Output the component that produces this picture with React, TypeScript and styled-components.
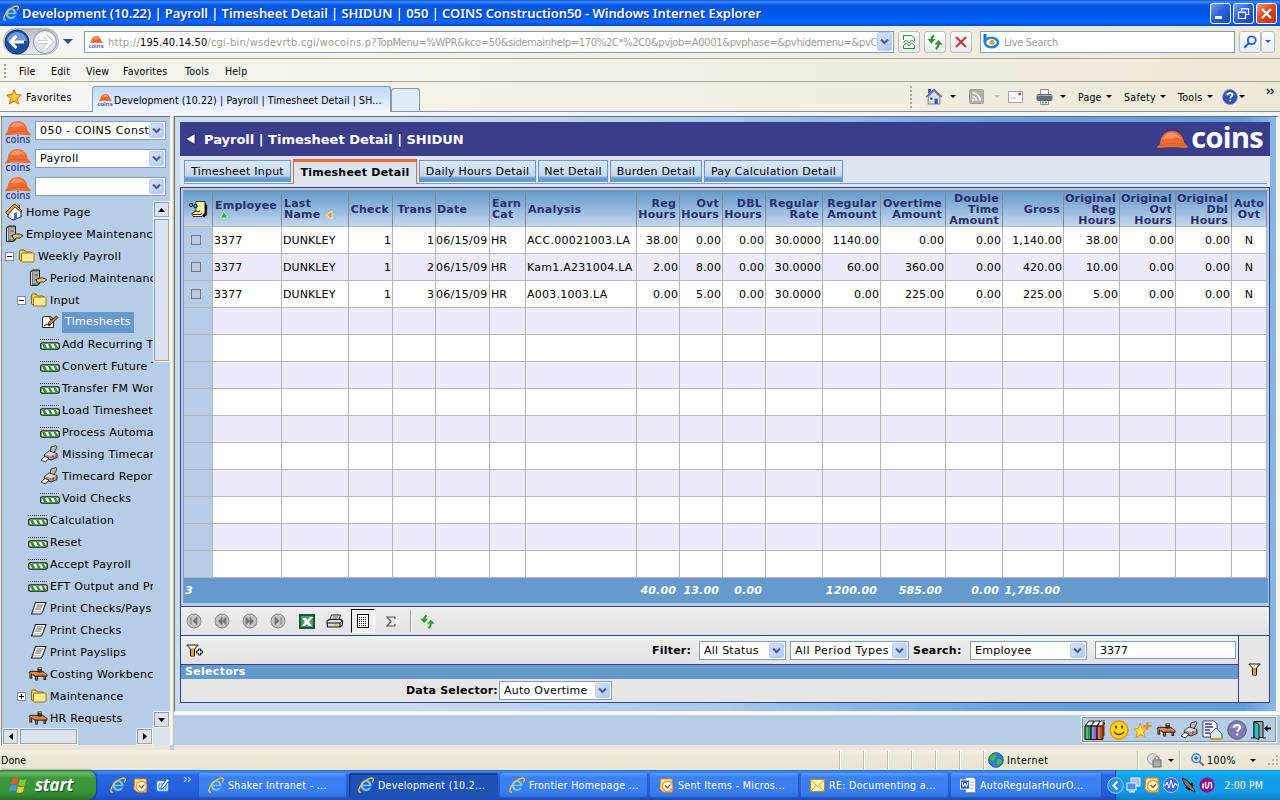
import React from "react";
import styled, { createGlobalStyle, css } from "styled-components";

const tahoma = `"DejaVu Sans Condensed", "DejaVu Sans", sans-serif`;
const verdana = `"DejaVu Sans", sans-serif`;

const Global = createGlobalStyle`
  * { box-sizing: border-box; }
  body { margin: 0; overflow: hidden; }
  svg { display: block; flex: none; }
`;

const Screen = styled.div`
  width: 1280px; height: 800px; display: flex; flex-direction: column; overflow: hidden;
  background: #ece9d8; font: 10.5px ${tahoma}; letter-spacing: .1px; color: #000; white-space: nowrap;
`;

/* ---------- generic pieces ---------- */
const Gap = styled.div<{ $w: number }>`width: ${p => p.$w}px; flex: none;`;
const Slot = styled.div<{ $w: number; $center?: boolean; $ls?: number }>`
  width: ${p => p.$w}px; flex: none; display: flex; align-items: center;
  justify-content: ${p => (p.$center ? "center" : "flex-start")};
  ${p => p.$ls !== undefined && css`letter-spacing: ${p.$ls}px;`}
`;
const Caret = styled.i<{ $c?: string; $s?: number }>`
  width: 0; height: 0; flex: none;
  border: ${p => p.$s || 3}px solid transparent; border-bottom: 0;
  border-top-color: ${p => p.$c || "#000"};
`;

const Svg = ({ w = 16, h = 16, vb, children }: { w?: number; h?: number; vb?: string; children: React.ReactNode }) => (
  <svg width={w} height={h} viewBox={vb || "0 0 16 16"}>{children}</svg>
);

/* ---------- icons ---------- */
const IE = ({ s = 16 }: { s?: number }) => (
  <Svg w={s} h={s}>
    <path d="M13.2 9.2H5.4c.1 1.700 1.200 2.700 2.800 2.700 1.100 0 1.900-.4 2.400-1.200h2.400c-.8 2.200-2.500 3.400-4.900 3.400-3.200 0-5.400-2.200-5.400-5.500s2.200-5.600 5.400-5.600c3.400 0 5.500 2.400 5.500 6.200zM5.500 7.400h5.100C10.400 6 9.500 5.100 8.100 5.100S5.700 6 5.500 7.400z" fill="#7cc8fa" stroke="#3f93e0" strokeWidth=".6" />
    <path d="M2.800 14.800C-.4 15.800.6 10.800 4.200 6.800 8 2.500 13.600-.2 15 1.500c.8 1 0 2.700-.8 4" fill="none" stroke="#f3c23a" strokeWidth="1.400" />
  </Svg>
);
const Helmet = ({ w, h }: { w: number; h: number }) => (
  <Svg w={w} h={h} vb="0 0 32 19">
    <path d="M0 18.500C.5 16.500 1.500 15.500 3 14.500 3.500 6 8.500 .8 15.500.8 22 .8 27 5.500 28 13l3.500 3.500c1 1-.5 1.800-3 1.800C20 17 9 17.500 0 18.500z" fill="#f26a32" />
    <path d="M6.500 9c1-4 4.500-6.500 8.500-6.500 4.500 0 7.500 2.500 9.500 6-4-2-7-.5-9 0-3 .7-6-1-9 .5z" fill="#fb9468" />
    <path d="M3 15c8-1.700 17-1.700 25-.5" fill="none" stroke="#d9531f" strokeWidth=".7" />
  </Svg>
);
const CoinsMini = styled.div<{ $s: number }>`
  width: ${p => p.$s}px; flex: none; display: flex; flex-direction: column; align-items: center;
  font: 600 ${p => p.$s * 0.38}px/${p => p.$s * 0.26}px "Open Sans", sans-serif; letter-spacing: 0; color: #3b3d91;
`;
const Favicon = () => (
  <CoinsMini $s={16}><Helmet w={13} h={9} />coins</CoinsMini>
);
const Folder = () => (
  <Svg w={17} h={14} vb="0 0 17 14">
    <path d="M1.500 11V2.500c0-1 .5-1.500 1.500-1.500h3l1.500 2H13l1 1v7.500H3z" fill="#f3cf58" stroke="#8a6410" />
    <path d="M3.500 12.500V5c0-.6.300-1 1-1H15c.8 0 1 .3 1 1v7c0 .7-.3 1-1 1H4.500c-.6 0-1 0-1-.5z" fill="#ffe894" stroke="#9c7418" />
  </Svg>
);
const House = () => (
  <Svg w={18} h={18} vb="0 0 18 18">
    <path d="M3 9l7-7 6 6v6l-8 3-5-3z" fill="#fff" stroke="#222" />
    <path d="M.7 9.500L8 2l2-1 7 7-1 1-6-5-5.500 6-1.500 2z" fill="#ff9c20" stroke="#333" strokeWidth=".9" />
    <path d="M9 16.500V10l3-1v6.500z" fill="#3f74c8" /><path d="M13 1.500v3M14.500 2v3" stroke="#b33" />
    <path d="M4 11l3 2v3l-3-2z" fill="#c9d9ef" />
  </Svg>
);
const Cabinet = () => (
  <Svg w={19} h={18} vb="0 0 19 18">
    <path d="M1.500 2.500L4 1h6.500v14L8 16.500H1.500z" fill="#777" stroke="#222" />
    <path d="M4 2.500h6v12H4z" fill="#ababab" /><path d="M2.500 3v13" stroke="#ddd" /><path d="M5.500 6h3M5.500 11h3" stroke="#444" />
    <path d="M7 10.500l4-1.500h3l4 1.500-3 2.500H11l-1 2-1.500-1.500z" fill="#f0bd66" stroke="#222" strokeWidth=".9" />
  </Svg>
);
const Sheet = () => (
  <Svg w={17} h={14} vb="0 0 17 14">
    <path d="M5.500 1.500H16l-3.500 9.500-1.500 2H1.500l1-2.500z" fill="#fff" stroke="#222" strokeWidth="1.100" />
    <path d="M7 4h6M6 6h6M5 8h6" stroke="#555" strokeWidth=".9" /><path d="M2.500 10.800h9" stroke="#999" strokeWidth=".8" />
  </Svg>
);
const Process = () => (
  <Svg w={20} h={12} vb="0 0 20 12">
    <path d="M0 1.500h20" stroke="#222" strokeDasharray="1 1" />
    <rect x=".8" y="4.800" width="18.400" height="6.400" rx="1.500" fill="#fff" stroke="#111" strokeWidth="1.300" />
    <path d="M2 6h3l2.500 4.500H4zM8 6h2.500l2.500 4.500h-3zM13.500 6h2.500l2 3.500v1h-2.500z" fill="#17a01b" />
  </Svg>
);
const EditIcon = () => (
  <Svg w={18} h={14} vb="0 0 18 14">
    <path d="M1.500 2.500l2-1h6l3 2.500v8.500h-11z" fill="#fff" stroke="#222" /><path d="M9 1.500v3h3" stroke="#222" fill="none" />
    <path d="M7 10l1-3 7.500-6 1.500 1.500-7.500 7z" fill="#c88140" stroke="#222" strokeWidth=".9" /><path d="M3 11l3-2 2 1.500 2-1" stroke="#111" fill="none" />
  </Svg>
);
const PrinterRed = () => (
  <Svg w={19} h={18} vb="0 0 19 18">
    <path d="M10 7l1-5 5-1.500 1 1.500-3 6z" fill="#b9b9b9" stroke="#333" strokeWidth=".9" />
    <path d="M4 10l5-4 8 2.500v4L11 15l-6-2z" fill="#9a9a9a" stroke="#222" strokeWidth=".9" />
    <path d="M5 9.500l4-3 7.500 2.200-5 2.300z" fill="#d8d8d8" />
    <path d="M1 15l4-3.500 4 1.500-3.500 4z" fill="#fff" stroke="#222" strokeWidth=".9" /><path d="M12 11.500h2" stroke="#f22" strokeWidth="2" />
  </Svg>
);
const Desk = ({ w = 20 }: { w?: number }) => (
  <Svg w={w} h={14} vb="0 0 20 14">
    <path d="M2.800 7v4.500M8.500 9v4.500M16.800 9v4" stroke="#1c0f05" strokeWidth="2.600" />
    <path d="M2.800 7v3.800M8.500 9v3.800M16.800 9v3.300" stroke="#c9743a" />
    <path d="M1 5.500l1-1.200h12.500L19 7.500v1.700H7z" fill="#d98a50" stroke="#1c0f05" strokeWidth=".9" />
    <path d="M1.500 6l5.700 2.600H18.500" stroke="#9a4f1c" fill="none" />
    <rect x="10" y="1" width="3.500" height="4" fill="#444" stroke="#111" strokeWidth=".9" /><path d="M10.500 1.500h3" stroke="#f90" />
  </Svg>
);
const NoteIcon = () => (
  <Svg w={20} h={18} vb="0 0 20 18">
    <path d="M8 1.500h9v11l-3 4H5l-1-3 4-3z" fill="#fff3a6" stroke="#111" strokeWidth=".8" />
    <path d="M18.500 5v9.500l-3 2.500M15 16.500l2.500-3.500V3" stroke="#111" fill="none" strokeWidth="1.300" /><path d="M6 12l3-1 2 1 1-2M5 14.500h8l1-2" stroke="#333" fill="none" />
    <circle cx="3" cy="5" r="1.700" fill="#29b6c6" stroke="#111" /><circle cx="7.500" cy="6" r="1.700" fill="#29b6c6" stroke="#111" />
  </Svg>
);
const RefreshGreen = ({ s = 16 }: { s?: number }) => (
  <Svg w={s} h={s}>
    <path d="M7 1.500C5 3 4.500 4.500 4.500 6" fill="none" stroke="#2e9a25" strokeWidth="2.200" /><path d="M.5 5h8l-4 4.500z" fill="#2e9a25" />
    <path d="M9 15c2-1.500 2.500-3 2.500-5" fill="none" stroke="#2e9a25" strokeWidth="2.200" /><path d="M7.500 10.500h8l-4-4.500z" fill="#2e9a25" />
  </Svg>
);
const HomeIE = () => (
  <Svg w={17} h={17}>
    <path d="M3 8v7h11V8L8.500 3z" fill="#dfe3ea" stroke="#76839b" /><path d="M1 8.500L8.500 1.500 16 8.500" stroke="#5d6f96" strokeWidth="1.500" fill="none" />
    <path d="M3 1v4.500L5.500 3V1z" fill="#2b38d8" /><path d="M9 10h3v5H9z" fill="#3451a8" /><path d="M5 9h2v2H5z" fill="#333" />
  </Svg>
);
const Rss = () => (
  <Svg w={15} h={15}><rect x=".5" y=".5" width="15" height="15" rx="2" fill="#b3b1a8" stroke="#98968d" />
    <path d="M3.500 8a4.500 4.500 0 014.500 4.500M3.500 4a8.500 8.500 0 018.500 8.500" fill="none" stroke="#fff" strokeWidth="1.700" /><circle cx="4.500" cy="11.700" r="1.300" fill="#fff" /></Svg>
);
const MailIE = () => (
  <Svg w={15} h={12} vb="0 0 15 12"><rect x=".5" y=".5" width="14" height="11" fill="#fbfbfd" stroke="#a3a4ae" /><path d="M10.500 3h2.500" stroke="#d33" strokeWidth="2.400" /><path d="M3 7h5" stroke="#bbb" /></Svg>
);
const PrinterIE = () => (
  <Svg w={17} h={16} vb="0 0 17 16"><path d="M4.500.5h8V6h-8zM4.500 11h8v4.500h-8z" fill="#fff" stroke="#8d8f98" /><rect x=".5" y="5" width="16" height="7" rx="2" fill="#696c74" /><path d="M1 6.500h15" stroke="#a9abb1" /><path d="M6 13.500h2" stroke="#2aa6e0" strokeWidth="2" /><path d="M9 13.500h2" stroke="#3cab3c" strokeWidth="2" /></Svg>
);
const Question = ({ s, c, c2 }: { s: number; c: string; c2: string }) => (
  <Svg w={s} h={s} vb="0 0 20 20"><circle cx="10" cy="10" r="9.300" fill={c} stroke={c2} />
    <path d="M3 8a7.500 6 0 0114 0z" fill="#fff" opacity=".25" />
    <path d="M7 7.800C7 5.800 8.300 5 10 5s3 1 3 2.600c0 2-2.700 2.100-2.700 4.200" fill="none" stroke="#fff" strokeWidth="2" /><path d="M9.300 13.500h2v2h-2z" fill="#fff" /></Svg>
);
const StarIcon = ({ s = 16 }: { s?: number }) => (
  <Svg w={s} h={s}><path d="M8 .7l2.200 4.900 5.200.5-4 3.500 1.200 5.400L8 12.200 3.400 15l1.200-5.400-4-3.500 5.200-.5z" fill="#fdc22b" stroke="#c47a0c" /><path d="M8 3l1.500 3.500 3 .3L8 8z" fill="#ffe88e" /></Svg>
);
const Broken = () => (
  <Svg w={14} h={16} vb="0 0 14 16"><path d="M1.500 6V1.500h8L12.500 4v3" fill="#fff" stroke="#278c2a" /><path d="M1.500 8.500l3-2.500 2.500 3 2.500-3 3 2.500M1.500 11.500L4.500 9 7 12l2.500-3 3 2.500v3h-11z" fill="#fff" stroke="#278c2a" /></Svg>
);
const Magnify = ({ s = 14, c = "#1f5fd8" }: { s?: number; c?: string }) => (
  <Svg w={s} h={s}><circle cx="10" cy="6" r="4.500" fill="#e8f2ff" stroke={c} strokeWidth="2" /><path d="M6.500 9.500L1.500 14.500" stroke={c} strokeWidth="2.600" /></Svg>
);
const Outlook = ({ s = 16 }: { s?: number }) => (
  <Svg w={s} h={s}><path d="M2 1h12v14H4.500L1 11.500z" fill="#ffe2a8" stroke="#e08a1c" /><circle cx="9" cy="9" r="5.500" fill="#fff8e4" stroke="#ee9a25" strokeWidth="1.500" /><path d="M6.500 8L9 10.500l3-3.500" fill="none" stroke="#8f5610" strokeWidth="1.400" /></Svg>
);
const Envelope = () => (
  <Svg w={15} h={13} vb="0 0 15 13"><rect x=".5" y=".5" width="14" height="12" fill="#fff3b2" stroke="#b88a28" /><path d="M.5 1l7 6.500L14.500 1M1 12l4.500-5M14 12L9.500 7" fill="none" stroke="#c79c3b" /></Svg>
);
const WordDoc = () => (
  <Svg><path d="M5.500.5h8l2 2v13h-10z" fill="#fff" stroke="#7b93bd" /><path d="M8 5h6M8 8h6M8 11h6" stroke="#9fb4d8" /><rect x=".5" y="3" width="9" height="9" fill="#2f5db3" stroke="#e4edfb" /><path d="M2 5l1.500 5L5 6l1.500 4L8 5" stroke="#fff" fill="none" /></Svg>
);
const DesktopIcon = () => (
  <Svg><rect x="1.500" y="3.500" width="12" height="11" rx="2" fill="#e8f3fd" stroke="#2f83cf" strokeWidth="1.400" /><path d="M4 7h7v5H4z" fill="#fff" stroke="#2f83cf" /><path d="M6 10l6-8.500 2.500 1.500-6 8-2.500 1z" fill="#d5ecfc" stroke="#1b5693" strokeWidth=".9" /></Svg>
);
const Globe = () => (
  <Svg w={16} h={16}><circle cx="8" cy="8" r="7.300" fill="#2a80d6" stroke="#225a92" /><path d="M3 4c2-2.500 5-2 5.500-.5S7 6 6.500 7.500 3.500 9 2 8zM9 8c2-1.500 4-.5 5 .5-.5 3-2.500 5-4 5-1-1.500-2-3.500-1-5.500z" fill="#4fb648" /></Svg>
);
const WinFlag = () => (
  <Svg w={20} h={18} vb="0 0 20 18">
    <path d="M3.500 2.500C5.500 1 7.500 1 9.500 2.500L8 8.500C6 7 4 7 2 8.500z" fill="#f0582c" /><path d="M10.800 3c2 1.300 4 1.300 6.500 0l-1.600 6c-2.200 1.300-4.400 1.200-6.400 0z" fill="#85c83c" />
    <path d="M1.700 9.800c2-1.500 4-1.500 6 0L6.200 15.500c-2-1.500-4-1.500-6 0z" fill="#4b93ee" /><path d="M9 10.200c2 1.300 4 1.300 6.300 0l-1.500 5.800c-2.200 1.200-4.200 1.200-6.300 0z" fill="#fcc733" />
  </Svg>
);
const Excel = () => (
  <Svg w={16} h={15} vb="0 0 16 15"><rect width="16" height="15" fill="#0f5a30" /><rect x="2" y="2" width="12" height="11" fill="#4f9a68" /><path d="M3 4h4l1.500 2L11 3h3L10 8l3 4H9.500L8 10l-2 2H3l3-4z" fill="#fff" /></Svg>
);
const PrintBW = () => (
  <Svg w={17} h={14} vb="0 0 17 14"><path d="M5.500 1h9l-2 5.500h-9z" fill="#fff" stroke="#111" /><path d="M7 3h5M6 5h5" stroke="#111" strokeWidth=".8" /><path d="M1 7l2-1.500h12L16.500 7v4L14 13H1.500z" fill="#ddd" stroke="#111" strokeWidth="1.200" /><path d="M1 9h13l2-2M14 9v4" stroke="#111" fill="none" /><path d="M8 11h4" stroke="#e4d400" strokeWidth="1.500" /></Svg>
);
const GridPage = () => (
  <Svg w={12} h={14} vb="0 0 12 14"><rect x=".5" y=".5" width="11" height="13" fill="#fff" stroke="#111" /><path d="M2 3.500h8M2 5.500h8M2 7.500h8M2 9.500h8M2 11.500h8" stroke="#111" strokeDasharray="1 1" /></Svg>
);
const Funnel = ({ plus }: { plus?: boolean }) => (
  <Svg w={plus ? 18 : 13} h={13} vb={plus ? "0 0 18 13" : "0 0 13 13"}>
    <path d="M.8 1h11.400L8.500 5v7h-4V5z" fill="#fff" stroke="#111" /><path d="M5 4.500h3v7H5z" fill="#f49a1c" />
    {plus && <path d="M12.500 5h2v2h2v2h-2v2h-2V9h-2V7h2z" fill="#fff" stroke="#111" />}
  </Svg>
);
const navPaths: Record<string, string> = {
  first: "M5 4.500v7M11 4.500L7 8l4 3.500z", prev: "M8 4.500L4.500 8 8 11.500zM12 4.500L8.500 8l3.500 3.500z",
  next: "M4 4.500L7.500 8 4 11.500zM8 4.500L11.500 8 8 11.500z", last: "M5 4.500L9 8l-4 3.500zM11 4.500v7",
};
const NavBtn = ({ k }: { k: string }) => (
  <Svg w={16} h={16}><circle cx="8" cy="8" r="7" fill="#c3c3c3" stroke="#868686" /><path d={navPaths[k]} fill="#777" stroke="#6c6c6c" strokeWidth=".8" /></Svg>
);
const Books = () => (
  <Svg w={21} h={20} vb="0 0 21 20">
    {["#18a54a", "#7a6fc0", "#c0501e"].map((c, i) => (
      <g key={c}><path d={`M${1 + i * 6} 6l4-5h5l-3 5z`} fill="#fff" stroke="#111" strokeWidth=".9" /><path d={`M${1 + i * 6} 6h6v13.500h-6z`} fill={c} stroke="#111" /><path d={`M${3 + i * 6} 7v12`} stroke="#fff" opacity=".5" /></g>
    ))}
    <path d="M19.500 2v14" stroke="#7a3010" strokeWidth="2" />
  </Svg>
);
const Smile = () => (
  <Svg w={20} h={20} vb="0 0 20 20"><circle cx="10" cy="10" r="9" fill="#ffd90e" stroke="#f0820c" strokeWidth="1.300" /><path d="M7 5.500v3M13 5.500v3" stroke="#5b3a00" strokeWidth="1.800" /><path d="M5 11.500c2 4 8 4 10 0" fill="none" stroke="#5b3a00" strokeWidth="1.300" /></Svg>
);
const StarPlus = () => (
  <Svg w={19} h={18} vb="0 0 19 18"><path d="M7 2l2 5 5 0-3.500 4 2 5.500-4.500-3-5 3 1.500-5.500L1 8l4.500-.5z" fill="#ffdf3d" stroke="#dd9612" /><path d="M14.500 1v8M10.500 5h8" stroke="#f5821f" strokeWidth="1.800" /></Svg>
);
const DocHome = () => (
  <Svg w={21} h={20} vb="0 0 21 20"><path d="M1 1h11l3 3v13H1z" fill="#fff" stroke="#445" /><path d="M3 4h7M3 7h8M3 10h5M3 13h5" stroke="#2432b8" strokeWidth="1.400" /><path d="M8 14l6-6 6 6v5H9z" fill="#d5eaf8" stroke="#556" /><path d="M9 19h11" stroke="#c89a3a" strokeWidth="2" /></Svg>
);
const ExitDoor = () => (
  <Svg w={21} h={20} vb="0 0 21 20"><path d="M3 1.500h9v16H3z" fill="#9aa" stroke="#111" /><path d="M3 1.500l5 3v15l-5-2z" fill="#21c4cc" stroke="#111" /><path d="M0 18h3M12 18h3" stroke="#111" /><path d="M14 8.500h6" stroke="#111" strokeWidth="2" /><path d="M13 8.500l3.500-3.500v7z" fill="#111" /></Svg>
);

/* ---------- title bar ---------- */
const TitleBar = styled.div`
  height: 26px; flex: none; display: flex; align-items: center; padding: 0 3px 0 3px;
  background: linear-gradient(#0a5bea 0, #3b8cf7 2px, #0759e6 5px, #0054e0 10px, #005df5 17px, #0069fd 22px, #0047cb 26px);
`;
const TitleText = styled.div`
  flex: 1; color: #fff; font: 600 13px "Noto Sans", "Open Sans", sans-serif; letter-spacing: -.06px; text-shadow: 1px 1px #0b2f8a;
`;
const WinBtn = styled.div<{ $red?: boolean }>`
  width: 21px; height: 21px; margin-left: 2px; border: 1px solid #fff; border-radius: 3px; display: flex; align-items: center; justify-content: center;
  background: ${p => (p.$red ? "linear-gradient(135deg,#f09a7f,#dd4a22 45%,#b93009)" : "linear-gradient(135deg,#7aa2f5,#2c63dd 45%,#1247b8)")};
`;

/* ---------- address row ---------- */
const chromeBg = `linear-gradient(90deg,#f5f5f2,#f1efe2 60%,#ece9d8)`;
const AddressRow = styled.div`
  height: 33px; flex: none; display: flex; align-items: center; padding: 0 0 1px 3px; background: ${chromeBg}; border-bottom: 1px solid #a5a394;
`;
const NavPill = styled.div`
  width: 56px; height: 27px; border-radius: 13px; border: 1px solid #b5b8bd; background: linear-gradient(#b9bcc2,#e9ebee); display: flex; align-items: center; justify-content: space-between;
`;
const Field = styled.div<{ $w: number; $h?: number }>`
  width: ${p => p.$w}px; height: ${p => p.$h || 22}px; flex: none; background: #fff; border: 1px solid #7f9db9; display: flex; align-items: center; overflow: hidden;
`;
const Url = styled.div`
  flex: 1; overflow: hidden; margin: 1px 0 0 4px; color: #9a9a9a; letter-spacing: .24px; font-size: 11px;
`;
const Host = styled.span`color: #000; letter-spacing: .1px;`;
const UrlPath = styled.span`letter-spacing: .26px;`;
const UrlQuery = styled.span`letter-spacing: -.31px;`;
const ToolBtn = styled.div<{ $w?: number }>`
  width: ${p => p.$w || 22}px; height: 22px; border: 1px solid #b9bcc4; border-radius: 3px; background: linear-gradient(#fff,#e9ebf3); display: flex; align-items: center; justify-content: center; flex: none;
`;
const DropBtn = styled.div<{ $h?: number }>`
  width: 15px; height: ${p => p.$h || 17}px; flex: none; margin-right: 1px; border-radius: 2px; background: linear-gradient(135deg,#d6e2fd,#b4c8f6); border: 1px solid #b9cbf3; display: flex; align-items: center; justify-content: center;
`;
const Drop = ({ h }: { h?: number }) => (
  <DropBtn $h={h}><Svg w={9} h={7} vb="0 0 9 7"><path d="M1 1.500l3.500 3.500L8 1.500" fill="none" stroke="#4a6184" strokeWidth="2.200" /></Svg></DropBtn>
);

const MenuRow = styled.div`
  height: 23px; flex: none; display: flex; align-items: center; background: ${chromeBg}; border-bottom: 1px solid #a5a394; padding-top: 1px;
`;
const Dots = styled.div<{ $h: number }>`
  width: 2px; height: ${p => p.$h}px; margin-left: 4px; background: repeating-linear-gradient(#aaa79a 0 2px, transparent 2px 4px);
`;

const TabRow = styled.div`
  height: 30px; flex: none; display: flex; align-items: center; background: ${chromeBg}; border-bottom: 1px solid #8b919c;
`;
const BrowserTab = styled.div<{ $w: number; $blank?: boolean }>`
  width: ${p => p.$w}px; height: ${p => (p.$blank ? 24 : 26)}px; margin-bottom: -1px; align-self: flex-end; flex: none; display: flex; align-items: center; padding-left: 4px; letter-spacing: .1px;
  border: 1px solid #8d98ab; border-bottom: ${p => (p.$blank ? "1px solid #8b919c" : 0)}; border-radius: 3px 3px 0 0;
  background: ${p => (p.$blank ? "#e0ebfa" : "linear-gradient(#c0d8fa,#f0f5fc)")};
`;

/* ---------- frames ---------- */
const Frames = styled.div`
  height: 638px; flex: none; display: flex; background: #b5cde6; border-top: 4px solid #f1f5fb; position: relative;
`;
const Side = styled.div`
  width: 170px; height: 634px; flex: none; border-left: 1px solid #f4f1e6; border-top: 1px solid #716f64; border-bottom: 5px solid #e9e6d9; display: flex; flex-direction: column; padding: 4px 0 0 1px;
  box-shadow: inset 1px 0 #8f8d80;
`;
const SideSelectRow = styled.div<{ $last?: boolean }>`height: ${p => (p.$last ? 23 : 28)}px; flex: none; display: flex; padding-left: 3px; align-items: flex-start;`;
const Select = styled(Field)<{ $ml?: number; $ls?: number }>`
  font: 11px ${verdana}; padding-left: 4px; margin-left: ${p => p.$ml || 0}px; letter-spacing: ${p => p.$ls ?? 0.25}px;
`;
const Grow = styled.div`flex: 1; overflow: hidden;`;
const SideLogo = styled.div`margin-top: -1px;`;

const TreeArea = styled.div`flex: 1; display: flex; min-height: 0;`;
const Tree = styled.div`width: 151px; overflow: hidden; padding-top: 1px;`;
const TreeRow = styled.div<{ $pad: number }>`
  height: 22px; padding-left: ${p => p.$pad + 1}px; display: flex; align-items: center; font: 11px ${verdana}; letter-spacing: .25px;
`;
const TreeText = styled.span<{ $sel?: boolean }>`
  ${p => p.$sel && css`background: #6699cc; color: #fff; height: 21px; line-height: 20px; padding: 0 3px; `}
`;
const Toggle = styled.div`
  width: 9px; height: 9px; border: 1px solid #7c8ba0; background: #fff; margin-right: 4px; display: flex; align-items: center; justify-content: center; flex: none;
`;
const VScroll = styled.div`width: 17px; display: flex; flex-direction: column; align-items: center; padding-top: 1px;`;
const bevel = css`background: #dce3ee; border: 1px solid #f5f3ea; box-shadow: inset 1px 1px #6f9de6, inset -1px -1px #a7a595;`;
const ScrollBtn = styled.div`
  width: 17px; height: 17px; flex: none; ${bevel} display: flex; align-items: center; justify-content: center;
`;
const VThumb = styled.div`width: 17px; height: 144px; ${bevel}`;
const HScroll = styled.div`height: 17px; display: flex; flex: none;`;
const HThumb = styled.div`width: 59px; height: 17px; ${bevel}`;
const Corner = styled.div`width: 17px; height: 17px; background: #dce3ee;`;
const Divider = styled.div`width: 4px; height: 629px; flex: none; background: linear-gradient(90deg,#f4f1e6 0 1px,#fff 1px 2px,#ece9d8 2px 3px,#c9c5b2 3px);`;

const RightSide = styled.div`flex: 1; display: flex; flex-direction: column; border-bottom: 5px solid #e9e6d9; height: 634px;`;
const Main = styled.div`
  height: 596px; border-top: 1px solid #716f64; border-left: 1px solid #716f64; border-right: 4px solid #f7f4ea; border-bottom: 1px solid #f4f1e6; padding: 5px 6px 0 5px;
  background: linear-gradient(90deg,#c8dcf0 0,#c8dcf0 20%,#a9c8ea 50%,#69a3e2 75%,#5f9ddd 97%,#8bb9e8);
`;
const White = styled.div`height: 3px; background: #fff;`;
const BottomBar = styled.div`flex: 1; display: flex; justify-content: flex-end; padding: 1px 3px 0 0;`;
const IconTray = styled.div`
  width: 196px; height: 27px; border: 1px solid #fff; box-shadow: inset 1px 1px #8f8d80, inset -1px -1px #8f8d80; display: flex; align-items: center; padding-left: 2px; gap: 3.900px;
`;

const PageTitle = styled.div`
  height: 34px; background: #393d8a; color: #fff; display: flex; align-items: center; padding: 0 7px 0 5px; font: bold 13px ${verdana}; letter-spacing: 0;
`;
const Brand = styled.div`
  display: flex; align-items: center; font: bold 29px/28px "Open Sans", sans-serif; letter-spacing: -.7px; gap: 3px; span { margin-top: -4px; }
`;
const Tabs = styled.div`
  height: 31px; background: #dde4ee; display: flex; align-items: flex-start; padding: 3px 3px 0 4px;
`;
const TabStrip = styled.div`height: 25px; width: 1083px; border-bottom: 1px solid #6ba0d0; display: flex; gap: 2px; align-items: flex-start;`;
const Tab = styled.div<{ $w: number; $on?: boolean }>`
  width: ${p => p.$w}px; height: 23px; margin-top: 1px; flex: none; display: flex; justify-content: center; font: 11px/22px ${verdana}; letter-spacing: .22px;
  border: 1px solid #6699cc; border-bottom: 1px solid #fff;
  background: linear-gradient(#dbe7f7 0,#c4d7ee 70%,#6699cc 82%,#6699cc);
  ${p => p.$on && css`margin-top: 0; height: 25px; font-weight: bold; letter-spacing: .22px; line-height: 22px; background: #dde4ee; border: 1px solid #ee6b35; border-top-width: 3px; border-bottom: 0;`}
`;
const Panel = styled.div`border: 1px solid #393d8a; height: 516px; background: #b5cde6; display: flex; flex-direction: column;`;

/* ---------- grid ---------- */
const cols = [29, 69, 67, 44, 43, 54, 36, 111, 43, 43, 43, 57, 58, 65, 57, 61, 56, 56, 56, 35];
const Grid = styled.div`margin: 2px 0 0 2px; width: 1085px; border-left: 1px solid #999; border-top: 1px solid #8a8a8a; flex: none;`;
const Row = styled.div<{ $h: number }>`
  display: grid; grid-template-columns: ${cols.map(c => c + "px").join(" ")}; grid-template-rows: 100%; height: ${p => p.$h}px;
`;
const Head = styled.div<{ $a?: string; $tight?: boolean }>`
  border-right: 1px solid #8a8a8a; border-bottom: 1px solid #b5b5b5; background: linear-gradient(#6699cc,#7fabd7 30%,#c3d6ec); color: #2c2d6e;
  font: bold 11px/11px ${verdana}; letter-spacing: .22px; display: flex; flex-direction: column; justify-content: center;
  padding: 1px ${p => (p.$a === "r" ? 3 : p.$a === "c" ? 0 : 1)}px 0 ${p => (p.$a === "r" || p.$a === "c" ? 0 : p.$tight ? 1 : 2)}px;
  align-items: ${p => (p.$a === "r" ? "flex-end" : p.$a === "c" ? "center" : "flex-start")};
`;
const HeadLine = styled.div`display: flex; align-items: center; gap: 6px;`;
const Cell = styled.div<{ $a?: string; $alt?: boolean; $sel?: boolean; $ls?: number; $tight?: boolean }>`
  border-right: 1px solid #b5b5b5; border-bottom: 1px solid #b5b5b5; background: ${p => (p.$sel ? "#b5cde6" : p.$alt ? "#edeafa" : "#fff")};
  font: 11px/24px ${verdana}; padding: 1px 1px 0 ${p => (p.$tight ? 0 : 1)}px; display: flex; align-items: center; letter-spacing: ${p => p.$ls ?? 0.1}px;
  justify-content: ${p => (p.$a === "r" ? "flex-end" : p.$a === "c" ? "center" : "flex-start")};
`;
const Check = styled.div`width: 10px; height: 10px; border: 1px solid #777; margin: -2px 0 0 -5px;`;
const Foot = styled(Row)`background: #6699cc; color: #fff; font: italic bold 11px/26px ${verdana}; width: 1084px;`;
const FootCell = styled.div<{ $l?: boolean }>`display: flex; justify-content: ${p => (p.$l ? "flex-start" : "flex-end")}; padding: 0 4px 0 1px; letter-spacing: .15px;`;

const heads: [string, string][] = [
  ["", "c"], ["Employee", "l"], ["Last|Name", "l"], ["Check", "r"], ["Trans", "r"], ["Date", "l"], ["Earn|Cat", "l"], ["Analysis", "l"],
  ["Reg|Hours", "r"], ["Ovt|Hours", "r"], ["DBL|Hours", "r"], ["Regular|Rate", "r"], ["Regular|Amount", "r"], ["Overtime|Amount", "r"],
  ["Double|Time|Amount", "r"], ["Gross", "r"], ["Original|Reg|Hours", "r"], ["Original|Ovt|Hours", "r"], ["Original|Dbl|Hours", "r"], ["Auto|Ovt", "c"],
];
const data = [
  ["", "3377", "DUNKLEY", "1", "1", "06/15/09", "HR", "ACC.00021003.LA", "38.00", "0.00", "0.00", "30.0000", "1140.00", "0.00", "0.00", "1,140.00", "38.00", "0.00", "0.00", "N"],
  ["", "3377", "DUNKLEY", "1", "2", "06/15/09", "HR", "Kam1.A231004.LA", "2.00", "8.00", "0.00", "30.0000", "60.00", "360.00", "0.00", "420.00", "10.00", "0.00", "0.00", "N"],
  ["", "3377", "DUNKLEY", "1", "3", "06/15/09", "HR", "A003.1003.LA", "0.00", "5.00", "0.00", "30.0000", "0.00", "225.00", "0.00", "225.00", "5.00", "0.00", "0.00", "N"],
];
const totals = ["3", "", "", "", "", "", "", "", "40.00", "13.00", "0.00", "", "1200.00", "585.00", "0.00", "1,785.00", "", "", "", ""];

/* ---------- lower panel ---------- */
const greyBg = `linear-gradient(#efefef,#e2e2e2)`;
const Tools = styled.div`height: 29px; margin-top: 3px; border-top: 1px solid #393d8a; background: ${greyBg}; display: flex; align-items: center; padding-left: 5px; flex: none;`;
const Pressed = styled.div`width: 24px; height: 24px; border: 1px solid #111; border-right-color: #fff; border-bottom-color: #fff; display: flex; align-items: center; justify-content: center; background: #f0f0f0;`;
const Lower = styled.div`flex: 1; border-top: 1px solid #393d8a; display: flex;`;
const LowerLeft = styled.div`width: 1057px; display: flex; flex-direction: column;`;
const FilterRow = styled.div`height: 29px; border-bottom: 1px solid #393d8a; background: ${greyBg}; display: flex; align-items: center; padding-left: 5px;`;
const SelectorsBar = styled.div`height: 14px; background: #6699cc; color: #fff; font: bold 11px/14px ${verdana}; padding-left: 4px; letter-spacing: .3px;`;
const DataRow = styled.div`flex: 1; background: #e6e6e6; display: flex; align-items: center; padding-left: 225px;`;
const Bold = styled.div<{ $w: number }>`width: ${p => p.$w}px; flex: none; font: bold 11px ${verdana}; letter-spacing: .22px;`;
const LowerRight = styled.div`flex: 1; background: #e6e6e6; border-left: 1px solid #393d8a; display: flex; align-items: center; justify-content: center;`;

/* ---------- status and task bars ---------- */
const Status = styled.div`
  height: 20px; flex: none; display: flex; align-items: center; padding-left: 1px; background: linear-gradient(#f3f1e6,#ebe8d7 30%,#e8e5d3);
`;
const Sep = styled.div<{ $ml?: number; $h?: number; $c?: string }>`width: 2px; height: ${p => p.$h || 18}px; border-left: 1px solid ${p => p.$c || "#c0bdaa"}; border-right: 1px solid #fff; margin-left: ${p => p.$ml || 0}px; flex: none;`;
const Taskbar = styled.div`
  height: 30px; flex: none; display: flex; align-items: center; background: linear-gradient(#2a62d0 0,#3f8cf3 2px,#2a66e0 5px,#245ddb 24px,#1c4bb5 30px);
`;
const Start = styled.div`
  width: 96px; height: 30px; display: flex; align-items: center; padding-left: 9px; border-radius: 0 9px 9px 0; color: #fff;
  font: italic bold 17px "Open Sans", sans-serif; letter-spacing: -.2px; text-shadow: 1px 1px 1px #1c4a1c; gap: 6px;
  background: linear-gradient(#2c7a2c 0,#68b868 3px,#3d973d 8px,#389438 22px,#276f27 30px); box-shadow: 1px 0 2px #12398f; margin-right: 14px;
  span { margin-top: -1px; }
`;
const Task = styled.div<{ $on?: boolean; $w: number }>`
  width: ${p => p.$w}px; height: 25px; margin-right: 2px; border-radius: 3px; display: flex; align-items: center; gap: 4px; padding: 0 0 0 9px; color: #fff; flex: none; letter-spacing: .34px;
  background: ${p => (p.$on ? "#1e52b7" : "linear-gradient(#5c9bfb 0,#3c81f3 4px,#3a7df0 20px,#2f6cdc)")};
  box-shadow: ${p => (p.$on ? "inset 1px 1px 2px #0e2f7a" : "inset -1px -1px 1px #2459c4")};
`;
const TrayBox = styled.div`
  flex: 1; height: 30px; margin-left: 11px; display: flex; align-items: center; background: linear-gradient(#0d7ed4 0,#18b5f5 2px,#139ee9 6px,#129be6 22px,#0f7bc6); border-left: 1px solid #0a3f9a; color: #fff; gap: 2.200px;
`;
const Pull = styled.div`width: 17px; margin-left: -9px; flex: none;`;

type TreeItem = [number, React.ReactNode, string, string?];
const P = <Process />;
const tree: TreeItem[] = [
  [2, <House key="i" />, "Home Page"], [2, <Cabinet key="i" />, "Employee Maintenance"], [2, <Folder key="i" />, "Weekly Payroll", "-"],
  [26, <Cabinet key="i" />, "Period Maintenance"], [14, <Folder key="i" />, "Input", "-"], [38, <EditIcon key="i" />, "Timesheets", "sel"],
  [37, P, "Add Recurring T"], [37, P, "Convert Future T"], [37, P, "Transfer FM Work"], [37, P, "Load Timesheets"], [37, P, "Process Automa"],
  [37, <PrinterRed key="i" />, "Missing Timecar"], [37, <PrinterRed key="i" />, "Timecard Repor"], [37, P, "Void Checks"], [25, P, "Calculation"],
  [25, P, "Reset"], [25, P, "Accept Payroll"], [25, P, "EFT Output and Pr"], [27, <Sheet key="i" />, "Print Checks/Pays"], [27, <Sheet key="i" />, "Print Checks"],
  [27, <Sheet key="i" />, "Print Payslips"], [25, <Desk key="i" />, "Costing Workbenc"], [14, <Folder key="i" />, "Maintenance", "+"], [25, <Desk key="i" />, "HR Requests"],
];
const textX = (i: number) => (i < 2 ? 23 : i === 2 ? 35 : i === 3 || i === 4 ? 47 : i < 14 ? 59 : 47);

const menus: [string, number][] = [["File", 32], ["Edit", 35], ["View", 37], ["Favorites", 62], ["Tools", 40], ["Help", 30]];
const tabs: [string, number][] = [["Timesheet Input", 107], ["Timesheet Detail", 124], ["Daily Hours Detail", 117], ["Net Detail", 70], ["Burden Detail", 92], ["Pay Calculation Detail", 139]];

export default function App() {
  return (
    <>
      <Global />
      <Screen>
        <TitleBar>
          <IE /><Gap $w={3} />
          <TitleText>Development (10.22) | Payroll | Timesheet Detail | SHIDUN | 050 | COINS Construction50 - Windows Internet Explorer</TitleText>
          <WinBtn><Svg w={13} h={13} vb="0 0 13 13"><path d="M1 10.500h7" stroke="#fff" strokeWidth="3" /></Svg></WinBtn>
          <WinBtn><Svg w={13} h={13} vb="0 0 13 13"><path d="M4.500 4V1.500h7v6H9M1.500 5h7v6.500h-7zM1.500 5.500h7M4.500 2h7" fill="none" stroke="#fff" strokeWidth="1.200" /></Svg></WinBtn>
          <WinBtn $red><Svg w={13} h={13} vb="0 0 13 13"><path d="M2 2l9 9M11 2l-9 9" stroke="#fff" strokeWidth="2.200" /></Svg></WinBtn>
        </TitleBar>

        <AddressRow>
          <NavPill>
            <Svg w={26} h={26} vb="0 0 26 26"><circle cx="13" cy="13" r="12" fill="#1d4f9c" stroke="#183c75" /><path d="M3 12a10 9 0 0120 0z" fill="#6d9bd6" /><path d="M12.500 7L6.500 13l6 6M7 13h13" fill="none" stroke="#fff" strokeWidth="3" /></Svg>
            <Svg w={26} h={26} vb="0 0 26 26"><circle cx="13" cy="13" r="11.500" fill="#dfe3ea" stroke="#8c96a5" /><path d="M3 12a10 9 0 0120 0z" fill="#f6f7f9" /><path d="M13.500 7l6 6-6 6M19 13H6" fill="none" stroke="#b4bcc9" strokeWidth="4" /><path d="M13.500 7l6 6-6 6M19 13H6" fill="none" stroke="#fff" strokeWidth="2.600" /></Svg>
          </NavPill>
          <Slot $w={25}><Gap $w={4} /><Caret $c="#1e5591" $s={5} /></Slot>
          <Field $w={810}>
            <Gap $w={3} /><Favicon />
            <Url>http://<Host>195.40.14.50</Host><UrlPath>/cgi-bin/wsdevrtb.cgi/wocoins.p?</UrlPath><UrlQuery>TopMenu=%WPR&amp;kco=50&amp;sidemainhelp=170%2C*%2C0&amp;pvjob=A0001&amp;pvphase=&amp;pvhidemenu=&amp;pvC</UrlQuery></Url>
            <Drop h={19} />
          </Field>
          <Gap $w={4} /><ToolBtn><Broken /></ToolBtn>
          <Gap $w={4} /><ToolBtn><RefreshGreen /></ToolBtn>
          <Gap $w={4} /><ToolBtn><Svg w={14} h={14} vb="0 0 14 14"><path d="M2 2l10 10M12 2L2 12" stroke="#c9393c" strokeWidth="2.200" /></Svg></ToolBtn>
          <Gap $w={8} />
          <Field $w={255}>
            <Gap $w={2} />
            <Svg w={17} h={15} vb="0 0 17 15"><path d="M2 0v9" stroke="#1173c7" strokeWidth="3" /><ellipse cx="8.500" cy="8.500" rx="6.500" ry="4.700" fill="#fff" stroke="#1c86d8" strokeWidth="2.600" /><circle cx="9" cy="8.300" r="2.600" fill="#ff9c1c" /></Svg>
            <Url><UrlQuery>Live Search</UrlQuery></Url>
          </Field>
          <Gap $w={4} /><ToolBtn><Magnify /></ToolBtn><ToolBtn $w={14}><Caret $c="#1f5fd8" /></ToolBtn>
        </AddressRow>

        <MenuRow>
          <Dots $h={14} /><Gap $w={13} />
          {menus.map(([m, w]) => <Slot key={m} $w={w} $ls={0.2}>{m}</Slot>)}
        </MenuRow>

        <TabRow>
          <Gap $w={6} /><Slot $w={20}><StarIcon /></Slot><Slot $w={66} $ls={0.35}>Favorites</Slot>
          <BrowserTab $w={299}><Favicon /><Gap $w={1} />Development (10.22) | Payroll | Timesheet Detail | SH...</BrowserTab>
          <BrowserTab $w={29} $blank />
          <Gap $w={486} /><Dots $h={22} /><Gap $w={13} />
          <Slot $w={25}><HomeIE /></Slot><Slot $w={19}><Caret /></Slot>
          <Slot $w={25}><Rss /></Slot><Slot $w={14}><Caret $c="#c3c0b2" /></Slot>
          <Slot $w={28}><MailIE /></Slot><Slot $w={24}><PrinterIE /></Slot><Slot $w={18}><Caret /></Slot>
          <Slot $w={28} $ls={0.2}>Page</Slot><Slot $w={18}><Caret /></Slot>
          <Slot $w={36} $ls={0.3}>Safety</Slot><Slot $w={18}><Caret /></Slot>
          <Slot $w={29} $ls={0.3}>Tools</Slot><Slot $w={15}><Caret /></Slot>
          <Slot $w={17}><Question s={16} c="#2f4fa8" c2="#8592b4" /></Slot><Slot $w={27}><Caret /></Slot>
          <Svg w={9} h={20} vb="0 0 9 20"><path d="M1 2l2.500 2.500L1 7M5 2l2.500 2.500L5 7" fill="none" stroke="#000" strokeWidth="1.300" /></Svg>
        </TabRow>

        <Frames>
          <Side>
            {["050 - COINS Const", "Payroll", ""].map((t, i) => (
              <SideSelectRow key={i} $last={i === 2}>
                <SideLogo><CoinsMini $s={26}><Helmet w={26} h={16} />coins</CoinsMini></SideLogo>
                <Select $w={131} $h={19} $ml={4} $ls={i === 0 ? 0.45 : 0.3}><Grow>{t}</Grow><Drop h={15} /></Select>
              </SideSelectRow>
            ))}
            <TreeArea>
              <Tree>
                {tree.map(([pad, icon, label, mode], i) => (
                  <TreeRow key={i} $pad={pad}>
                    {(mode === "-" || mode === "+") && <Toggle><Svg w={5} h={5} vb="0 0 5 5"><path d={mode === "-" ? "M0 2.500h5" : "M0 2.500h5M2.500 0v5"} stroke="#000" /></Svg></Toggle>}
                    <Slot $w={textX(i) - pad - (mode === "-" || mode === "+" ? 13 : 0)}>{icon}</Slot>
                    <TreeText $sel={mode === "sel"}>{label}</TreeText>
                  </TreeRow>
                ))}
              </Tree>
              <VScroll>
                <ScrollBtn><Svg w={7} h={4} vb="0 0 7 4"><path d="M0 4L3.500 0 7 4z" /></Svg></ScrollBtn>
                <VThumb />
                <Grow />
                <ScrollBtn><Svg w={7} h={4} vb="0 0 7 4"><path d="M0 0l3.500 4L7 0z" /></Svg></ScrollBtn>
              </VScroll>
            </TreeArea>
            <HScroll>
              <ScrollBtn><Svg w={4} h={7} vb="0 0 4 7"><path d="M4 0L0 3.500 4 7z" /></Svg></ScrollBtn>
              <HThumb /><Grow />
              <ScrollBtn><Svg w={4} h={7} vb="0 0 4 7"><path d="M0 0l4 3.500L0 7z" /></Svg></ScrollBtn>
              <Corner />
            </HScroll>
          </Side>
          <Divider />
          <RightSide>
            <Main>
              <PageTitle>
                <Slot $w={19}><Svg w={11} h={12} vb="0 0 11 12"><path d="M10 .5L1 6l9 5.500z" fill="#fff" stroke="#111" strokeWidth=".7" /></Svg></Slot>
                <Grow>Payroll | Timesheet Detail | SHIDUN</Grow>
                <Brand><Helmet w={31} h={19} /><span>coins</span></Brand>
              </PageTitle>
              <Tabs><TabStrip>{tabs.map(([t, w], i) => <Tab key={t} $w={w} $on={i === 1}>{t}</Tab>)}</TabStrip></Tabs>
              <Panel>
                <Grid>
                  <Row $h={36}>
                    {heads.map(([h, a], i) => (
                      <Head key={i} $a={a} $tight={i === 5}>
                        {i === 0 ? <NoteIcon /> : h.split("|").map((l, j) => (
                          <HeadLine key={j}>{l}{i === 2 && j === 1 && <Svg w={7} h={8} vb="0 0 7 8"><path d="M6 0v8L0 4z" fill="#f0a818" stroke="#fff" strokeWidth=".6" /></Svg>}</HeadLine>
                        ))}
                        {i === 1 && <Svg w={18} h={8} vb="0 0 18 8"><path d="M9 .5L12.500 7h-7z" fill="#18b018" stroke="#fff" strokeWidth=".6" /></Svg>}
                      </Head>
                    ))}
                  </Row>
                  {Array.from({ length: 13 }, (_, r) => (
                    <Row key={r} $h={27}>
                      {heads.map(([, a], c) => (
                        <Cell key={c} $a={a} $alt={r % 2 === 1} $sel={c === 0} $tight={c === 5} $ls={c === 7 || c === 5 ? 0.25 : 0.1}>{c === 0 ? (r < 3 ? <Check /> : null) : data[r]?.[c]}</Cell>
                      ))}
                    </Row>
                  ))}
                  <Foot $h={25}>{totals.map((t, i) => <FootCell key={i} $l={i === 0}>{t}</FootCell>)}</Foot>
                </Grid>
                <Tools>
                  {["first", "prev", "next", "last"].map(k => <Slot key={k} $w={28}><NavBtn k={k} /></Slot>)}
                  <Gap $w={1} /><Slot $w={27}><Excel /></Slot><Slot $w={25}><PrintBW /></Slot>
                  <Pressed><GridPage /></Pressed>
                  <Slot $w={32} $center><Svg w={10} h={11} vb="0 0 10 11"><path d="M9 3V1H1l4 4.500L1 10h8V8" fill="none" stroke="#555" strokeWidth="1.200" /></Svg></Slot>
                  <Gap $w={3} /><Sep $h={22} $c="#999" /><Gap $w={8} /><RefreshGreen s={15} />
                </Tools>
                <Lower>
                  <LowerLeft>
                    <FilterRow>
                      <Funnel plus /><Gap $w={448} />
                      <Bold $w={47}>Filter:</Bold>
                      <Select $w={87} $h={19}><Grow>All Status</Grow><Drop h={15} /></Select><Gap $w={4} />
                      <Select $w={119} $h={19} $ls={0.5}><Grow>All Period Types</Grow><Drop h={15} /></Select><Gap $w={4} />
                      <Bold $w={57}>Search:</Bold>
                      <Select $w={117} $h={19}><Grow>Employee</Grow><Drop h={15} /></Select><Gap $w={8} />
                      <Select $w={141} $h={18} $ls={0}>3377</Select>
                    </FilterRow>
                    <SelectorsBar>Selectors</SelectorsBar>
                    <DataRow>
                      <Bold $w={93}>Data Selector:</Bold>
                      <Select $w={113} $h={19}><Grow>Auto Overtime</Grow><Drop h={15} /></Select>
                    </DataRow>
                  </LowerLeft>
                  <LowerRight><Funnel /></LowerRight>
                </Lower>
              </Panel>
            </Main>
            <White />
            <BottomBar>
              <IconTray>
                <Books /><Smile /><StarPlus /><Desk /><PrinterRed /><DocHome /><Question s={20} c="#7c7bb0" c2="#5d5c8c" /><ExitDoor />
              </IconTray>
            </BottomBar>
          </RightSide>
        </Frames>

        <Status>
          <Slot $w={838}>Done</Slot>
          <Sep /><Sep $ml={22} /><Sep $ml={22} /><Sep $ml={22} /><Sep $ml={22} /><Sep $ml={22} /><Sep $ml={22} />
          <Gap $w={3} /><Slot $w={19}><Globe /></Slot><Slot $w={130} $ls={0.5}>Internet</Slot>
          <Sep /><Gap $w={7} />
          <Slot $w={22}><Svg w={16} h={16}><circle cx="7" cy="7" r="5.500" fill="#d8d8d8" stroke="#aaa" /><rect x="7" y="8" width="8" height="7" fill="#aaa" stroke="#777" /><path d="M9 8V6c0-2 4-2 4 0v2" fill="none" stroke="#777" /></Svg></Slot>
          <Slot $w={11}><Caret /></Slot><Sep /><Gap $w={10} />
          <Slot $w={16}><Svg w={14} h={14}><circle cx="6" cy="6" r="5" fill="#cfe5ff" stroke="#2a6fd0" strokeWidth="1.500" /><path d="M3.500 6h5M6 3.500v5" stroke="#2a6fd0" strokeWidth="1.500" /><path d="M10 10l4.500 4.500" stroke="#777" strokeWidth="2.500" /></Svg></Slot>
          <Slot $w={43} $ls={0.5}>100%</Slot><Caret /><Gap $w={11} />
          <Svg w={12} h={12} vb="0 0 12 12"><path d="M9 1h2v2H9zM5 5h2v2H5zM9 5h2v2H9zM1 9h2v2H1zM5 9h2v2H5zM9 9h2v2H9z" fill="#b8b4a0" /></Svg>
        </Status>

        <Taskbar>
          <Start><WinFlag /><span>start</span></Start>
          <Slot $w={23}><IE /></Slot><Slot $w={22}><Outlook s={15} /></Slot><Slot $w={28}><DesktopIcon /></Slot>
          <Slot $w={16}><Svg w={9} h={20} vb="0 0 9 20"><path d="M1 2l2.500 2.500L1 7M5 2l2.500 2.500L5 7" fill="none" stroke="#9cc4ff" strokeWidth="1.200" /></Svg></Slot>
          <Task $w={148}><IE />Shaker Intranet - ...</Task>
          <Task $w={149} $on><IE />Development (10.2...</Task>
          <Task $w={148}><IE />Frontier Homepage ...</Task>
          <Task $w={149}><Outlook s={15} />Sent Items - Micros...</Task>
          <Task $w={148}><Envelope />RE: Documenting a...</Task>
          <Task $w={151}><WordDoc />AutoRegularHourO...</Task>
          <TrayBox>
            <Pull><Svg w={17} h={17} vb="0 0 17 17"><circle cx="8.500" cy="8.500" r="7.800" fill="#2a8df0" stroke="#8fd0fb" /><path d="M10.500 4.500l-4 4 4 4" fill="none" stroke="#fff" strokeWidth="2" /></Svg></Pull>
            <Svg><rect x="5" y="1" width="9" height="8" fill="#9fc4f1" stroke="#e8f2fc" /><rect x="1" y="6" width="9" height="7" fill="#4f8be0" stroke="#e8f2fc" /><path d="M3 14.500h6" stroke="#ddd" strokeWidth="2" /></Svg>
            <Outlook s={16} />
            <Svg><circle cx="8" cy="8" r="7.500" fill="#4468da" stroke="#a9c1fb" /><path d="M1 8h2l1-3 2 6 2-8 2 8 2-5 1 2h2" fill="none" stroke="#fff" /></Svg>
            <Svg><path d="M1 1l6 3 6 8 1 3-4-2-6-5z" fill="#777" stroke="#111" /><path d="M10 6l2 3M5 10l4 3" stroke="#111" strokeWidth="2" /></Svg>
            <Svg><circle cx="8" cy="8" r="7.500" fill="#8c0c86" /><path d="M4 11.500V6.500M6.500 5v4.500c0 2 3 2 3-.5V7c0-2 3-2 3 0v4.500" fill="none" stroke="#fff" strokeWidth="1.500" /></Svg>
            <Gap $w={5} />2:00 PM
          </TrayBox>
        </Taskbar>
      </Screen>
    </>
  );
}
